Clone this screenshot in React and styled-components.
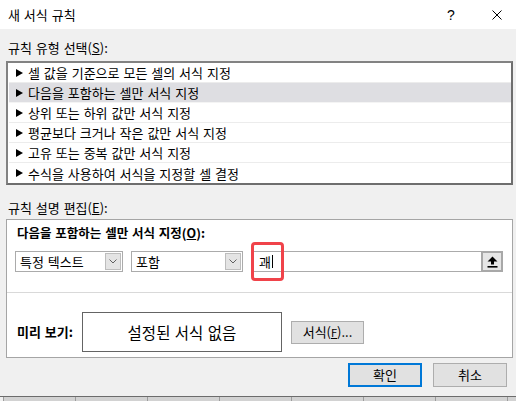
import styled, { createGlobalStyle } from 'styled-components';

const GlobalStyle = createGlobalStyle`
  html, body {
    margin: 0;
    padding: 0;
    background: #f0f0f0;
  }
  body {
    font-family: "Noto Sans CJK KR", "Noto Sans", sans-serif;
    font-size: 13px;
    word-spacing: 1px;
    color: #000;
  }
  * {
    box-sizing: border-box;
  }
`;

const rules = [
  '셀 값을 기준으로 모든 셀의 서식 지정',
  '다음을 포함하는 셀만 서식 지정',
  '상위 또는 하위 값만 서식 지정',
  '평균보다 크거나 작은 값만 서식 지정',
  '고유 또는 중복 값만 서식 지정',
  '수식을 사용하여 서식을 지정할 셀 결정'
];

const Screen = styled.div`
  width: 516px;
  height: 401px;
  overflow: hidden;
  display: flex;
  flex-direction: column;
`;

const Dialog = styled.div`
  height: 396px;
  background: #f0f0f0;
  display: flex;
  flex-direction: column;
`;

const TitleBar = styled.div`
  height: 29px;
  flex-shrink: 0;
  background: #fff;
  display: flex;
  align-items: center;
  padding-left: 8px;
`;

const Title = styled.span`
  flex: 1;
  line-height: 16px;
`;

const Help = styled.span`
  width: 20px;
  margin-right: 31px;
  font-family: "Liberation Sans", sans-serif;
  font-size: 14px;
  text-align: center;
`;

const CloseBtn = styled.svg`
  width: 10px;
  height: 10px;
  margin-right: 14px;
`;

const Content = styled.div`
  padding: 0 3px 0 6px;
  display: flex;
  flex-direction: column;
`;

const SectionLabel = styled.div`
  line-height: 16px;
  margin-top: ${(p) => p.$top}px;
  padding-left: 2px;
`;

const Key = styled.span`
  text-decoration: underline;
  text-underline-offset: 1px;
`;

const RuleList = styled.div`
  margin-top: 5px;
  border: 2px solid #7a7a7a;
  border-color: #828282 #6e6e6e #6e6e6e #828282;
  background: #fff;
  padding: 0 0 0 1px;
  height: 124px;
`;

const RuleRow = styled.div`
  height: 20px;
  display: flex;
  align-items: center;
  padding-left: 7px;
  background: ${(p) => (p.$selected ? '#dedee2' : '#fff')};
  border-bottom: 1px solid ${(p) => (p.$selected ? '#f4f4f4' : '#ececec')};

  &:last-child {
    border-bottom: none;
  }
`;

const Arrow = styled.span`
  width: 0;
  height: 0;
  border-top: 4px solid transparent;
  border-bottom: 4px solid transparent;
  border-left: 7px solid #000;
  margin-right: 5px;
`;

const EditBox = styled.div`
  margin-top: 3px;
  height: 139px;
  border: 1px solid #a5a5a5;
  background: #fff;
  display: flex;
  flex-direction: column;
  padding-top: 5px;
`;

const BoldLabel = styled.div`
  font-weight: 700;
  font-size: 12.5px;
  line-height: 16px;
  padding-left: 10px;
`;

const ControlRow = styled.div`
  display: flex;
  margin-top: 10px;
  padding-left: 8px;
  height: 21px;
  gap: 8px;
`;

const Select = styled.div`
  width: ${(p) => p.$w}px;
  height: 21px;
  border: 1px solid #ababab;
  background: #fff;
  display: flex;
  align-items: center;
  padding: 1px;
  padding-left: 4px;
`;

const SelectText = styled.span`
  flex: 1;
  line-height: 16px;
`;

const DropBtn = styled.div`
  width: 16px;
  height: 17px;
  background: #e4e4e4;
  border: 1px solid #bdbdbd;
  display: flex;
  align-items: center;
  justify-content: center;
`;

const InputWrap = styled.div`
  position: relative;
  width: 252px;
  height: 21px;
  border: 1px solid #ababab;
  background: #fff;
  display: flex;
  align-items: center;
  padding-left: 7px;
`;

const InputText = styled.span`
  flex: 1;
  line-height: 16px;
  display: flex;
  align-items: center;
`;

const Caret = styled.span`
  width: 1px;
  height: 13px;
  background: #000;
  margin-left: 1px;
`;

const CollapseBtn = styled.div`
  width: 22px;
  height: 21px;
  margin-right: -1px;
  border: 2px solid #a8a8a8;
  background: #e6e6e6;
  display: flex;
  align-items: center;
  justify-content: center;
`;

const Highlight = styled.div`
  position: absolute;
  left: -1px;
  top: -10px;
  width: 33px;
  height: 39px;
  border: 3px solid #f0434a;
  border-radius: 4px;
  pointer-events: none;
`;

const Divider = styled.div`
  height: 1px;
  background: #d9d9d9;
  margin: 20px 0 0 0;
`;

const PreviewRow = styled.div`
  margin-top: 19px;
  display: flex;
  align-items: center;
  padding-left: 10px;
`;

const PreviewLabel = styled.span`
  font-weight: 700;
  line-height: 16px;
  width: 65px;
`;

const PreviewBox = styled.div`
  width: 200px;
  height: 40px;
  border: 1px solid #646464;
  display: flex;
  align-items: center;
  justify-content: center;
  font-size: 15.5px;
`;

const Button = styled.div`
  width: ${(p) => p.$w}px;
  height: ${(p) => p.$h}px;
  background: #e1e1e1;
  border: ${(p) => (p.$default ? '2px solid #0078d7' : '1px solid #adadad')};
  display: flex;
  align-items: center;
  justify-content: center;
  line-height: 16px;
  margin-left: ${(p) => p.$ml || 0}px;
`;

const Small = styled.span`
  font-size: 11px;
`;

const Footer = styled.div`
  display: flex;
  justify-content: flex-end;
  gap: 11px;
  margin-top: 5px;
  padding-right: 6px;
`;

const SheetStrip = styled.div`
  height: 5px;
  border-top: 1px solid #6c6c6c;
  display: flex;
  padding-left: 3px;
`;

const SheetCell = styled.div`
  width: 72px;
  flex-shrink: 0;
  border-left: 1px solid #9c9c9c;
  background: #d2d2d2;
`;

function Chevron() {
  return (
    <svg width="8" height="5" viewBox="0 0 8 5">
      <path d="M0.5 0.5 L4 4 L7.5 0.5" fill="none" stroke="#606060" strokeWidth="1" />
    </svg>
  );
}

function UpArrow() {
  return (
    <svg width="11" height="12" viewBox="0 0 11 12">
      <path d="M5.5 0.5 L10.5 5.5 L7 5.5 L7 8.5 L4 8.5 L4 5.5 L0.5 5.5 Z" fill="#000" />
      <rect x="0.5" y="10" width="10" height="1.6" fill="#000" />
    </svg>
  );
}

export default function App() {
  return (
    <Screen>
      <GlobalStyle />
      <Dialog>
        <TitleBar>
          <Title>새 서식 규칙</Title>
          <Help>?</Help>
          <CloseBtn viewBox="0 0 10 10">
            <path d="M0.5 0.5 L9.5 9.5 M9.5 0.5 L0.5 9.5" stroke="#000" strokeWidth="1" />
          </CloseBtn>
        </TitleBar>
        <Content>
          <SectionLabel $top={11}>
            규칙 유형 선택(<Key>S</Key>):
          </SectionLabel>
          <RuleList>
            {rules.map((r, i) => (
              <RuleRow key={r} $selected={i === 1}>
                <Arrow />
                {r}
              </RuleRow>
            ))}
          </RuleList>
          <SectionLabel $top={15}>
            규칙 설명 편집(<Key>E</Key>):
          </SectionLabel>
          <EditBox>
            <BoldLabel>
              다음을 포함하는 셀만 서식 지정(<Key>O</Key>):
            </BoldLabel>
            <ControlRow>
              <Select $w={108}>
                <SelectText>특정 텍스트</SelectText>
                <DropBtn>
                  <Chevron />
                </DropBtn>
              </Select>
              <Select $w={112}>
                <SelectText>포함</SelectText>
                <DropBtn>
                  <Chevron />
                </DropBtn>
              </Select>
              <InputWrap>
                <InputText>
                  괘<Caret />
                </InputText>
                <CollapseBtn>
                  <UpArrow />
                </CollapseBtn>
                <Highlight />
              </InputWrap>
            </ControlRow>
            <Divider />
            <PreviewRow>
              <PreviewLabel>미리 보기:</PreviewLabel>
              <PreviewBox>설정된 서식 없음</PreviewBox>
              <Button $w={73} $h={23} $ml={9}>
                서식(<Key><Small>F</Small></Key>)...
              </Button>
            </PreviewRow>
          </EditBox>
          <Footer>
            <Button $w={74} $h={24} $default>
              확인
            </Button>
            <Button $w={74} $h={24}>
              취소
            </Button>
          </Footer>
        </Content>
      </Dialog>
      <SheetStrip>
        {Array.from({ length: 8 }).map((_, i) => (
          <SheetCell key={i} />
        ))}
      </SheetStrip>
    </Screen>
  );
}
